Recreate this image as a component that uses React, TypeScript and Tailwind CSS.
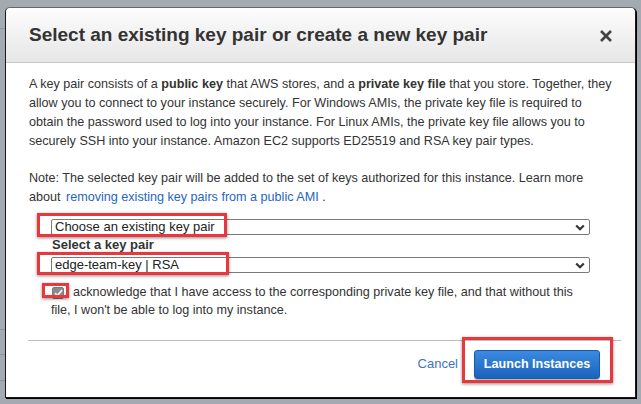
import React from "react";

function Chevron() {
  return (
    <svg width="10" height="7" viewBox="0 0 10 7" className="shrink-0">
      <polyline points="1.2,1.5 5,5.2 8.8,1.5" fill="none" stroke="#333" strokeWidth="2.2" />
    </svg>
  );
}

function FakeSelect({ value }: { value: string }) {
  return (
    <div className="w-[539px] h-[16px] border border-[#7a7a7a] rounded-[2px] bg-white flex items-center justify-between pl-[3px] pr-[4px] text-[13px] leading-[14px] text-[#222]">
      <span className="whitespace-nowrap">{value}</span>
      <Chevron />
    </div>
  );
}

function Annotation({ className }: { className: string }) {
  return <div className={"absolute border-[3px] border-[#e8373d] shadow-[0_1px_3px_rgba(0,0,0,0.45)] " + className} />;
}

export default function App() {
  return (
    <div className="relative w-[641px] h-[404px] overflow-hidden bg-[#a3aab1] font-['Liberation_Sans',Arial,sans-serif]">
      {/* background table row lines on left strip */}
      <div className="absolute left-0 top-[28px] w-[5px] h-[1px] bg-[#8d949b]" />
      <div className="absolute left-0 top-[329px] w-[5px] h-[1px] bg-[#8d949b]" />
      <div className="absolute left-0 top-[354px] w-[5px] h-[1px] bg-[#8d949b]" />
      <div className="absolute left-0 top-[380px] w-[5px] h-[1px] bg-[#8d949b]" />

      <div className="pt-[7px] pl-[5px]">
        <div className="w-[631px] h-[391px] bg-white rounded-t-[5px] border border-[#1a1a1a] border-t-[#666] shadow-[1px_1px_0_#000] flex flex-col">
          {/* header */}
          <div className="h-[55px] shrink-0 rounded-t-[5px] bg-gradient-to-b from-[#fdfdfd] to-[#e6e6e6] border-b border-[#c9c9c9] flex items-center justify-between pl-[23px] pr-[22px]">
            <div className="text-[19px] font-bold text-[#333] whitespace-nowrap mt-[1px]">
              Select an existing key pair or create a new key pair
            </div>
            <svg width="14" height="14" viewBox="0 0 14 14" className="mt-[2px]">
              <line x1="2" y1="2" x2="12" y2="12" stroke="#444" strokeWidth="2.6" />
              <line x1="12" y1="2" x2="2" y2="12" stroke="#444" strokeWidth="2.6" />
            </svg>
          </div>

          {/* body */}
          <div className="pl-[23px] pr-[20px] pt-[12px] text-[12.6px] leading-[19px] text-[#333]">
            <p className="whitespace-nowrap mb-[18px]">
              A key pair consists of a <b>public key</b> that AWS stores, and a <b>private key file</b> that you store. Together, they
              <br />
              allow you to connect to your instance securely. For Windows AMIs, the private key file is required to
              <br />
              obtain the password used to log into your instance. For Linux AMIs, the private key file allows you to
              <br />
              securely SSH into your instance. Amazon EC2 supports ED25519 and RSA key pair types.
            </p>
            <p className="whitespace-nowrap">
              Note: The selected key pair will be added to the set of keys authorized for this instance. Learn more
              <br />
              about <span className="ml-[2px] text-[#1f66c1]">removing existing key pairs from a public AMI</span> .
            </p>

            <div className="ml-[22px] mt-[12px]">
              <FakeSelect value="Choose an existing key pair" />
              <div className="h-[22px] pl-[1px] font-bold text-[13px] leading-[19px] text-[#333]">Select a key pair</div>
              <FakeSelect value="edge-team-key | RSA" />
              <div className="mt-[10px] whitespace-nowrap leading-[18px]">
                <span className="inline-flex align-[-1px] ml-[1px] mr-[2px] w-[12px] h-[12px] rounded-[2px] bg-[#8a8a8a] border border-[#7a7a7a] items-center justify-center">
                  <svg width="9" height="8" viewBox="0 0 9 8">
                    <polyline points="1,4.2 3.4,6.5 8,1.2" fill="none" stroke="#f2f2f2" strokeWidth="1.8" />
                  </svg>
                </span>
                I acknowledge that I have access to the corresponding private key file, and that without this
                <br />
                file, I won't be able to log into my instance.
              </div>
            </div>
          </div>

          {/* footer */}
          <div className="mt-auto h-[57px] shrink-0 ml-[22px] mr-[14px] border-t border-[#bdbdbd] flex items-start justify-end pt-[9px] pr-[21px]">
            <span className="mt-[4px] mr-[16px] text-[13px] leading-[19px] text-[#4172c4]">Cancel</span>
            <div className="w-[126px] h-[29px] rounded-[3px] border border-[#1b5aa6] bg-gradient-to-b from-[#3b8be0] to-[#1c62bd] shadow-[0_1px_1px_rgba(0,0,0,0.3)] flex items-center justify-center text-white font-bold text-[12.6px]">
              Launch Instances
            </div>
          </div>
        </div>
      </div>

      {/* red annotation boxes */}
      <Annotation className="left-[37px] top-[213px] w-[190px] h-[24px]" />
      <Annotation className="left-[37px] top-[252px] w-[192px] h-[23px]" />
      <Annotation className="left-[42px] top-[283px] w-[27px] h-[15px]" />
      <Annotation className="left-[462px] top-[337px] w-[151px] h-[46px]" />
    </div>
  );
}
